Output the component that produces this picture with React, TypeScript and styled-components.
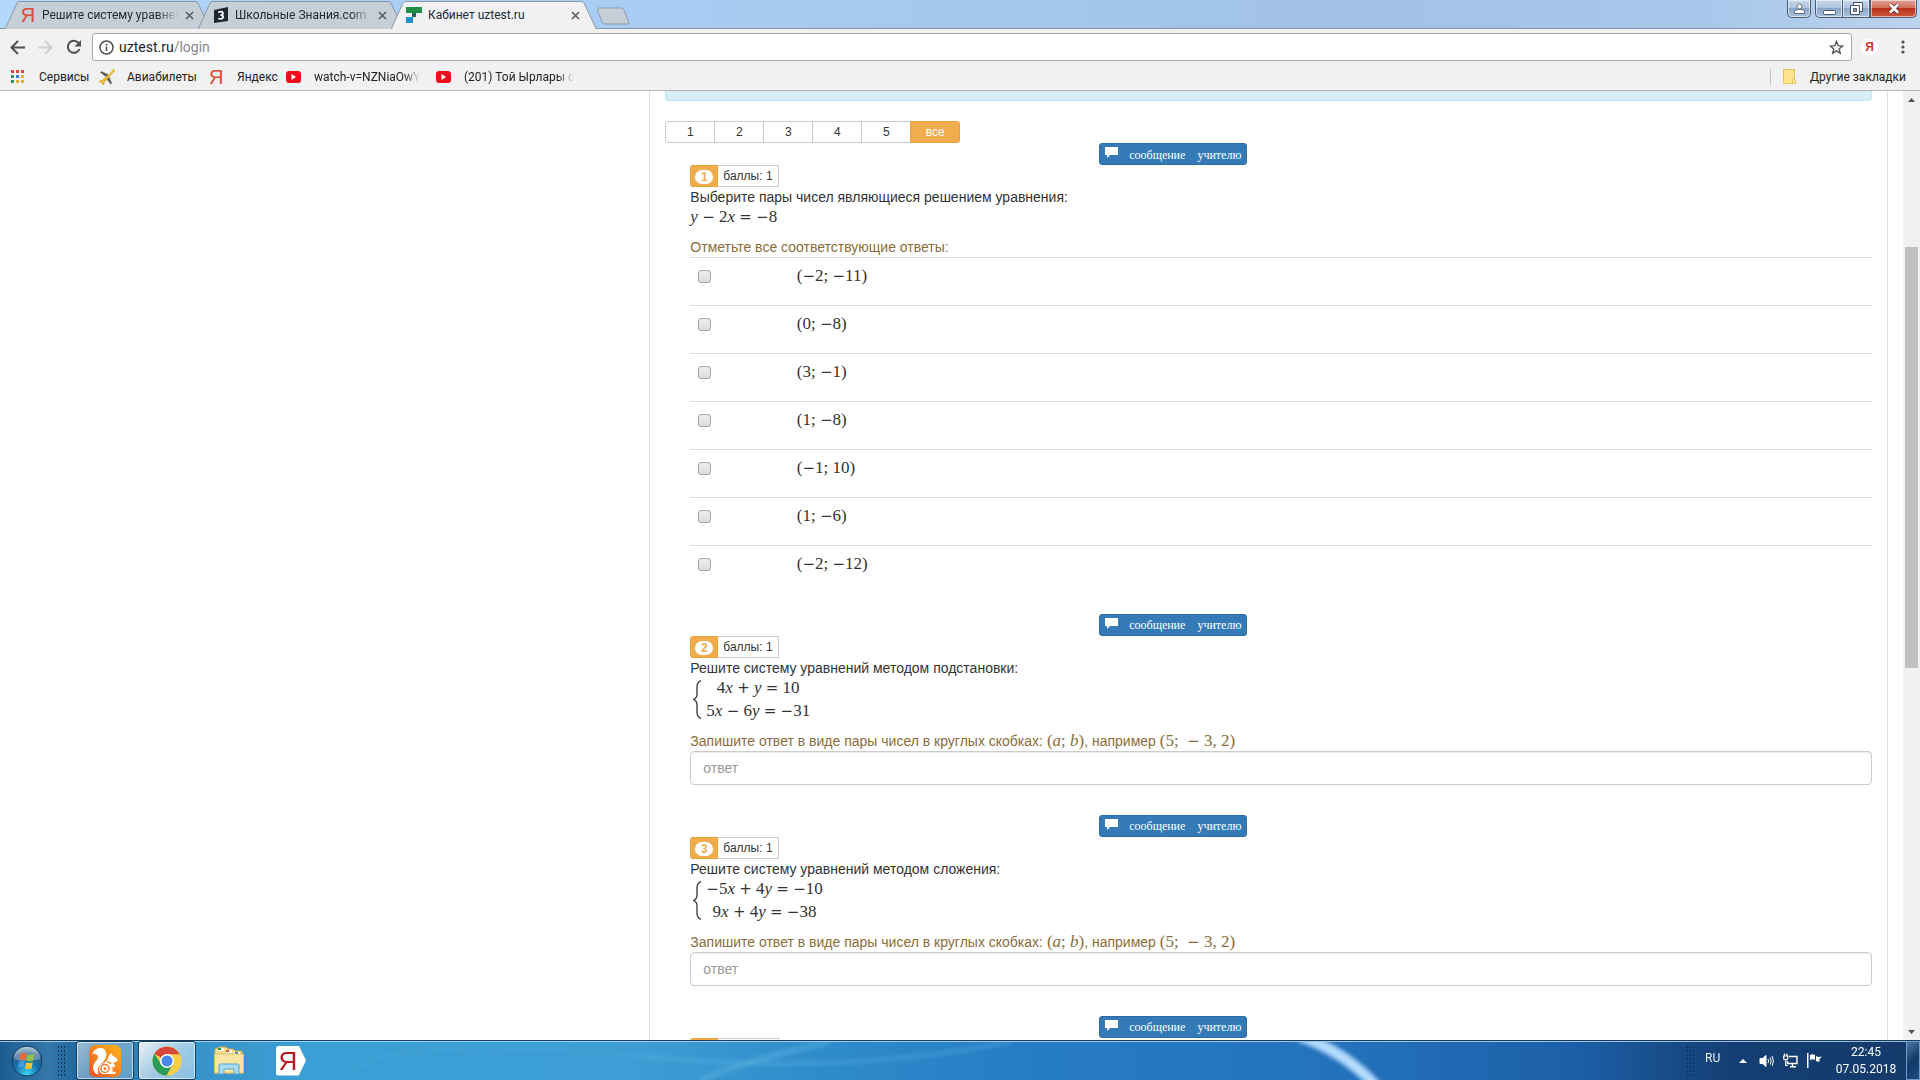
import React from "react";
import styled, { createGlobalStyle, css } from "styled-components";

const UI = `Roboto, "Noto Sans", sans-serif`;
const BODY = `"Liberation Sans", Arial, sans-serif`;
const NARROW = `"Liberation Sans Narrow", "Liberation Sans", Arial, sans-serif`;
const SERIF = `"Liberation Serif", "Times New Roman", serif`;

const GlobalStyle = createGlobalStyle`
  *, *::before, *::after { box-sizing: border-box; }
  body { margin: 0; font-family: ${BODY}; font-size: 14px; line-height: 20px; color: #333; background: #fff; }
  button, input { font: inherit; color: inherit; margin: 0; }
  button { padding: 0; border: 0; background: none; }
  a { color: inherit; text-decoration: none; }
  svg { display: block; flex: none; }
`;

const Screen = styled.div`
  height: 100vh;
  display: flex;
  flex-direction: column;
  overflow: hidden;
`;

/* ---------- Browser chrome ---------- */

const TitleBar = styled.header`
  flex: none;
  height: 29px;
  display: flex;
  align-items: flex-start;
  padding-left: 5px;
  background: linear-gradient(90deg, #b4d8fb 0, #a9cdf3 30%, #a1c2e6 70%, #a6c6ea 88%, #bcd3ec 100%);
  border-bottom: 1px solid #8797ab;
  font-family: ${UI};
`;

const Tabs = styled.nav`
  display: flex;
  height: 29px;
  padding-top: 1px;
`;

const TabBox = styled.div<{ $active?: boolean }>`
  position: relative;
  z-index: ${(p) => (p.$active ? 2 : 0)};
  width: 206px;
  height: 28px;
  display: flex;
  align-items: center;
  padding: 0 14px 0 15px;
  & + & { margin-left: -13px; }
`;

const TabShape = styled.svg`
  position: absolute;
  inset: 0;
  z-index: -1;
  width: 100%;
  height: 100%;
`;

const TabIcon = styled.span`
  width: 16px;
  height: 20px;
  display: flex;
  align-items: center;
  justify-content: center;
`;

const fade = css`
  mask-image: linear-gradient(90deg, #000 85%, transparent 100%);
`;

const TabTitle = styled.button<{ $fade?: boolean }>`
  flex: 1;
  min-width: 0;
  margin: 0 3px 0 6px;
  white-space: nowrap;
  text-align: left;
  font-size: 12px;
  line-height: 20px;
  color: #222b36;
  ${(p) => p.$fade && fade}
`;

const TabClose = styled.button`
  width: 16px;
  height: 16px;
  display: flex;
  align-items: center;
  justify-content: center;
`;

const NewTab = styled.button`
  margin-top: 7px;
`;

const WindowButtons = styled.div`
  margin-left: auto;
  margin-right: 3px;
  display: flex;
`;

const WinButton = styled.button<{ $w: number; $close?: boolean; $edge?: "left" | "right" | "both" }>`
  width: ${(p) => p.$w}px;
  height: 18px;
  display: flex;
  align-items: center;
  justify-content: center;
  border: 1px solid #4a5e78;
  border-top: 0;
  border-left-width: ${(p) => (p.$edge ? 1 : 0)}px;
  border-radius: ${(p) => (p.$edge ? { left: "0 0 0 5px", right: "0 0 5px 0", both: "0 0 5px 5px" }[p.$edge] : "0")};
  margin-right: ${(p) => (p.$edge === "both" ? 4 : 0)}px;
  box-shadow: inset 0 0 0 1px rgba(255, 255, 255, 0.55);
  background: ${(p) =>
    p.$close
      ? "linear-gradient(#e2a396 0, #d2705c 45%, #b8311a 50%, #d0573c 100%)"
      : "linear-gradient(#c6d7ea 0, #aec3dc 45%, #8ba6c6 50%, #a9c2de 100%)"};
`;

const Toolbar = styled.div`
  flex: none;
  height: 34px;
  display: flex;
  align-items: center;
  padding: 2px 9px 0 10px;
  background: #f1f1f1;
`;

const NavButton = styled.button`
  width: 28px;
  height: 28px;
  display: flex;
  align-items: center;
`;

const Omnibox = styled.div`
  flex: 1;
  height: 28px;
  margin: 0 9px 0 -2px;
  padding: 0 7px 0 6px;
  display: flex;
  align-items: center;
  border: 1px solid #a9a9a9;
  border-radius: 3px;
  background: #fff;
`;

const Address = styled.div`
  flex: 1;
  height: 20px;
  margin-left: 5px;
  font-family: ${UI};
  font-size: 14px;
  line-height: 20px;
  color: #222;
  outline: none;
  span { color: #888; }
`;

const Extension = styled.button`
  width: 17px;
  height: 17px;
  border-radius: 50%;
  background: #fff;
  color: #d9302b;
  font-family: ${NARROW};
  font-size: 12px;
  font-weight: bold;
  line-height: 17px;
  margin-right: 16px;
`;

const MenuButton = styled.button`
  width: 17px;
  height: 20px;
  display: flex;
  align-items: center;
  justify-content: center;
`;

const Bookmarks = styled.nav`
  flex: none;
  height: 28px;
  display: flex;
  align-items: center;
  padding: 0 14px 0 11px;
  background: #f1f1f1;
  border-bottom: 1px solid #b3b3b3;
  font-family: ${UI};
  font-size: 12px;
  color: #222;
`;

const Bookmark = styled.a<{ $w: number }>`
  width: ${(p) => p.$w}px;
  display: flex;
  align-items: center;
  white-space: nowrap;
`;

const BookmarkTitle = styled.span<{ $fade?: boolean }>`
  ${(p) => p.$fade && fade}
`;

const BookmarkIcon = styled.span`
  flex: none;
  width: 16px;
  height: 20px;
  margin-right: 12px;
  display: flex;
  align-items: center;
`;

const OtherBookmarks = styled.a`
  margin-left: auto;
  height: 16px;
  display: flex;
  align-items: center;
  gap: 14px;
  padding-left: 12px;
  border-left: 1px solid #c0c0c0;
`;

const YaLetter = styled.span<{ $size: number }>`
  font-family: ${NARROW};
  font-size: ${(p) => p.$size}px;
  line-height: 20px;
  color: #dd4b39;
`;

/* ---------- Page ---------- */

const Viewport = styled.main`
  flex: 1;
  min-height: 0;
  display: flex;
  overflow: hidden;
  background: #fff;
`;

const PageBody = styled.div`
  flex: 1;
  min-width: 0;
  display: flex;
  padding-right: 15px;
`;

const Sidebar = styled.div`
  flex: none;
  width: calc(100% / 3 + 20px);
`;

const Panel = styled.div`
  flex: 1;
  min-width: 0;
  height: max-content;
  padding: 0 15px;
  border: solid #ddd;
  border-width: 0 1px;
`;

const Alert = styled.div`
  height: 10px;
  margin-bottom: 20px;
  background: #d9edf7;
  border: 1px solid #bce8f1;
  border-top: 0;
  border-radius: 0 0 4px 4px;
`;

const Pager = styled.div`
  display: flex;
`;

const PageButton = styled.button<{ $active?: boolean }>`
  width: 50px;
  height: 22px;
  font-size: 12px;
  line-height: 18px;
  text-align: center;
  border: 1px solid ${(p) => (p.$active ? "#eea236" : "#ccc")};
  background: ${(p) => (p.$active ? "#f0ad4e" : "#fff")};
  color: ${(p) => (p.$active ? "#fff" : "#333")};
  & + & { margin-left: -1px; }
  &:first-child { border-radius: 3px 0 0 3px; }
  &:last-child { border-radius: 0 3px 3px 0; }
`;

const QuestionBox = styled.section`
  padding-left: 25px;
  margin-bottom: 20px;
`;

const MessageButton = styled.button`
  height: 22px;
  margin-left: calc(100% / 3 + 15px);
  padding: 1px 5px 0;
  display: flex;
  align-items: center;
  border: 1px solid #2e6da4;
  border-radius: 3px;
  background: #337ab7;
  color: #fff;
  font-family: ${SERIF};
  font-size: 12px;
  line-height: 20px;
  svg { margin: 0 11px 4px 0; }
  span + span { margin-left: 12px; }
`;

const Score = styled.div`
  display: flex;
  width: max-content;
  height: 22px;
  font-size: 12px;
  line-height: 20px;
`;

const Num = styled.span`
  width: 28px;
  display: flex;
  align-items: center;
  justify-content: center;
  border: 1px solid #eea236;
  border-radius: 3px 0 0 3px;
  background: #f0ad4e;
`;

const NumBadge = styled.span`
  width: 18px;
  height: 14px;
  margin-top: 2px;
  border-radius: 8px;
  background: #fff;
  color: #f0ad4e;
  font-weight: bold;
  line-height: 14px;
  text-align: center;
`;

const Points = styled.span`
  padding: 0 5px;
  border: 1px solid #ccc;
  border-left: 0;
`;

const Text = styled.p`
  margin: 0;
`;

const Formula = styled.div`
  height: 20px;
`;

const hintStyle = css`
  display: block;
  height: 20px;
  margin: 10px 0 0;
  color: #8a6d3b;
`;

const Hint = styled.p`
  ${hintStyle}
`;

const HintLabel = styled.label`
  ${hintStyle}
`;

const MathText = styled.span`
  font-family: ${SERIF};
  font-size: 17px;
  line-height: 20px;
  white-space: pre;
`;

const Operator = styled.span`
  font-family: "DejaVu Sans", sans-serif;
  font-size: 15px;
  line-height: 16px;
`;

const System = styled.div`
  display: flex;
  align-items: center;
  gap: 4px;
  height: 43px;
  padding-left: 3px;
`;

const SystemRows = styled.div`
  display: grid;
  row-gap: 3px;
  justify-items: center;
`;

const Options = styled.table`
  width: 100%;
  border-collapse: collapse;
  table-layout: fixed;
  td { height: 48px; padding: 8px; border-top: 1px solid #ddd; vertical-align: top; }
  td:first-child { width: 8.3333%; }
`;

const OptionLabel = styled.label`
  display: block;
  height: 20px;
`;

const Check = styled.input`
  appearance: none;
  display: block;
  width: 13px;
  height: 13px;
  margin-top: 4px;
  border: 1px solid #a6a6a6;
  border-radius: 3px;
  background: linear-gradient(#eee, #dcdcdc);
`;

const Answer = styled.input`
  display: block;
  width: 100%;
  height: 34px;
  margin-bottom: 30px;
  padding: 6px 12px;
  border: 1px solid #ccc;
  border-radius: 4px;
  background: #fff;
  box-shadow: inset 0 1px 1px rgba(0, 0, 0, 0.075);
  &::placeholder { color: #999; opacity: 1; }
`;

const ScrollTrack = styled.div`
  flex: none;
  width: 17px;
  display: grid;
  grid-template-rows: 17px 139fr 421fr 355fr 17px;
  background: #f1f1f1;
`;

const ScrollArrow = styled.button<{ $row: number }>`
  grid-row: ${(p) => p.$row};
  display: flex;
  align-items: center;
  justify-content: center;
`;

const Thumb = styled.div`
  grid-row: 3;
  margin: 0 2px;
  background: #c1c1c1;
`;

/* ---------- Taskbar ---------- */

const TaskbarBox = styled.footer`
  position: relative;
  isolation: isolate;
  flex: none;
  height: 40px;
  display: flex;
  align-items: stretch;
  border-top: 1px solid #163d5e;
  box-shadow: inset 0 1px 0 rgba(200, 230, 250, 0.75);
  background: linear-gradient(90deg, #1d5c90 0, #3477a8 2.5%, #20689f 4%, #3691c8 9%, #3a9fd4 16%, #3c9ed4 33%, #2f8dcb 42%, #277ec5 52%, #2372bb 70%, #1c5fa8 82%, #184c88 87%, #143f74 90%, #143a69 100%);
`;

const Glow = styled.svg`
  position: absolute;
  inset: 1px 0 0 0;
  z-index: -1;
  width: 100%;
  height: 38px;
`;

const StartButton = styled.button`
  width: 53px;
  display: flex;
  align-items: center;
  justify-content: center;
`;

const Grip = styled.span`
  width: 9px;
  margin: 4px 10px 4px 4px;
  background-image: radial-gradient(circle, #0b3157 0 1px, transparent 1px);
  background-size: 3px 4px;
`;

const TaskButton = styled.button<{ $lit?: number }>`
  width: 58px;
  margin-right: 4px;
  display: flex;
  align-items: center;
  justify-content: center;
  ${(p) =>
    p.$lit &&
    css`
      border: 1px solid #123e60;
      border-radius: 3px;
      box-shadow: inset 0 0 0 1px rgba(255, 255, 255, 0.6);
      background: linear-gradient(135deg, rgba(255, 255, 255, ${p.$lit}) 0, rgba(255, 255, 255, ${p.$lit * 0.6}) 50%, rgba(255, 255, 255, ${p.$lit * 0.45}) 100%);
    `}
`;

const Tray = styled.div`
  margin-left: auto;
  display: flex;
  align-items: center;
  color: #fff;
  font-family: ${UI};
  font-size: 12px;
  & > ${Grip} { align-self: stretch; }
`;

const Language = styled.button`
  width: 17px;
  height: 26px;
  margin-right: 13px;
  padding-bottom: 6px;
  line-height: 20px;
  text-align: left;
  color: #e6eef7;
`;

const TrayIcons = styled.div`
  display: flex;
  align-items: center;
  gap: 9px;
`;

const TrayIcon = styled.button`
  width: 15px;
  height: 20px;
  display: flex;
  align-items: center;
  justify-content: center;
`;

const Clock = styled.time`
  width: 80px;
  margin-left: 4px;
  text-align: center;
  line-height: 17px;
  span { display: block; }
`;

const ShowDesktop = styled.button`
  align-self: stretch;
  width: 14px;
  border: 1px solid #6f9cc4;
  background: linear-gradient(135deg, #4f7aa6, #143a69 50%, #1b4a80);
`;

/* ---------- Icons ---------- */

const CloseX = () => (
  <svg width="9" height="9" viewBox="0 0 9 9" stroke="#55595e" strokeWidth="1.5">
    <path d="M1 1l7 7M8 1L1 8" />
  </svg>
);

const ZIcon = () => (
  <svg width="16" height="17" viewBox="0 0 16 17">
    <path d="M1 3L15 0V14L1 16Z" fill="#1f2730" />
    <path d="M5.200 5.200Q9.500 3.600 10 6 10 8 7.500 8.200 10.500 8.200 10.300 10.300 9.500 12.700 5.200 11.500" fill="none" stroke="#fff" strokeWidth="1.700" />
  </svg>
);

const UzIcon = () => (
  <svg width="16" height="16" viewBox="0 0 16 16">
    <path d="M0 0h16v6H0z" fill="#1f8f45" />
    <path d="M6 6h4v4H6z" fill="#28644e" />
    <path d="M0 10h7v6H0z" fill="#1990d2" />
  </svg>
);

const AppsIcon = () => (
  <svg width="13" height="13" viewBox="0 0 13 13">
    {["#db4437", "#d9483b", "#db4437", "#3b8d5a", "#3f79d8", "#e7b42c", "#2f8d5a", "#e5ad26", "#e5ad26"].map((c, i) => (
      <rect key={i} x={(i % 3) * 5} y={Math.floor(i / 3) * 5} width="3" height="3" fill={c} />
    ))}
  </svg>
);

const PlaneIcon = () => (
  <svg width="16" height="16" viewBox="0 0 16 16">
    <path d="M10 6L14 1.200Q15.800 0 15.500 1.800L10.500 7.500 5 13.500 4.800 15.500 3.600 15.600 3 13.600.6 12.800.8 11.600 3 11.500z" fill="#f2c230" stroke="#d9a51f" strokeWidth=".8" />
    <path d="M1 3.200L2.500 2.200 9.500 5.500 7 8z" fill="#62645a" />
    <path d="M10.300 8L13 14.200 11.800 15.500 7.800 10.500z" fill="#62645a" />
  </svg>
);

const YoutubeIcon = () => (
  <svg width="15" height="12" viewBox="0 0 15 12">
    <rect width="15" height="12" rx="3" fill="#e8101a" />
    <path d="M5.500 3l4.500 3-4.500 3z" fill="#fff" />
  </svg>
);

const FolderIcon = () => (
  <svg width="13" height="15" viewBox="0 0 13 15">
    <path d="M.5.5h11v10l1 1v3H.5z" fill="#fde38c" stroke="#e6c65c" />
    <path d="M9.500 14v-3.500h2" fill="none" stroke="#e6c65c" />
  </svg>
);

const StarIcon = () => (
  <svg width="15" height="15" viewBox="0 0 15 15" fill="none" stroke="#555" strokeWidth="1.400">
    <path d="M7.500 1.500l1.700 4.200 4.500.3-3.500 2.900 1.100 4.400-3.800-2.400-3.800 2.400 1.100-4.400L1.300 6l4.500-.3z" />
  </svg>
);

const SpeechIcon = () => (
  <svg width="13" height="11" viewBox="0 0 13 11">
    <path d="M0 0h13v8H5l-3 3V8H0z" fill="#fff" />
  </svg>
);

const Brace = () => (
  <svg width="9" height="39" viewBox="0 0 9 39" fill="none" stroke="#333" strokeWidth="1.300">
    <path d="M8 .7Q4 2 4 7v7q0 4-3.300 5.500Q4 21 4 25v7q0 5 4 6.300" />
  </svg>
);

const WindowsOrb = () => (
  <svg width="32" height="32" viewBox="0 0 32 32">
    <defs>
      <radialGradient id="orb" cx="50%" cy="95%" r="95%">
        <stop offset="0" stopColor="#3fd8f5" />
        <stop offset=".45" stopColor="#1671ad" />
        <stop offset=".75" stopColor="#2b5f8c" />
        <stop offset="1" stopColor="#a7c3d8" />
      </radialGradient>
    </defs>
    <circle cx="16" cy="16" r="15" fill="url(#orb)" stroke="#123c60" />
    <path d="M3 14a13 12 0 0 1 26 0q-13 4-26 0z" fill="#fff" opacity=".3" />
    <path d="M9.500 9q3-2 6-.3l-1.200 6.500q-3-1.500-6 .3z" fill="#ef6a2c" />
    <path d="M16.700 9.300q3 1.500 6.500 0L22 15.800q-3.300 1.500-6.500 0z" fill="#8cc63e" />
    <path d="M8 16.800q3-1.800 6-.3l-1.200 6.200q-3-1.500-6 .3z" fill="#3f9de0" />
    <path d="M15.200 17.200q3.300 1.500 6.500 0l-1.200 6.300q-3.300 1.500-6.500 0z" fill="#fbc628" />
  </svg>
);

const UCIcon = () => (
  <svg width="32" height="32" viewBox="0 0 32 32">
    <defs>
      <linearGradient id="uc" x1="1" y1="0" x2="0" y2="1">
        <stop offset="0" stopColor="#fdb515" />
        <stop offset="1" stopColor="#f0532d" />
      </linearGradient>
    </defs>
    <rect width="32" height="32" rx="6" fill="url(#uc)" />
    <path d="M13 3Q5 2 3.500 9.500q3-2 5 1Q10 13 7 16q-4 4-2.500 9 1 3.500 5 4.500-2-6 2-10l3-3Q19 11 16.500 6 15.500 3.500 13 3z" fill="#fff" />
    <path d="M22 8l2 3q4 1 4.500 4.500-1.500 2-4.500 2 2.500 2 2 5l-2.500-1v5l3 .5v2H14q-4-1-4-5t5-6q3-1.500 4-4.500.7-3 3-5.500z" fill="#fff" />
    <circle cx="16" cy="23.500" r="4" fill="none" stroke="#f37a26" strokeWidth="1.500" />
    <circle cx="16" cy="23.500" r="1.500" fill="#f37a26" />
    <path d="M18 17q3-.5 4 2" stroke="#f58a25" fill="none" strokeWidth="1.500" />
  </svg>
);

const ChromeIcon = () => (
  <svg width="30" height="30" viewBox="0 0 30 30">
    <circle cx="15" cy="15" r="14.500" fill="#f9cf45" />
    <path d="M15 15L2.400 7.800A14.500 14.500 0 0 1 27.600 8.300H15z" fill="#d8453a" />
    <path d="M2.400 7.800A14.500 14.500 0 0 0 14.500 29.500L20.800 18.300 15 15 9.200 18.300z" fill="#279b57" />
    <circle cx="15" cy="15" r="7" fill="#fff" />
    <circle cx="15" cy="15" r="5.500" fill="#4687f0" />
  </svg>
);

const ExplorerIcon = () => (
  <svg width="32" height="30" viewBox="0 0 32 30">
    <path d="M2 3L7 1h6l2 2h5l2 2h7v22H2z" fill="#f2dc8c" stroke="#c9ad58" />
    <path d="M5 2h6v3H5zM13 4h6v3h-6zM21 6h6v3h-6z" fill="#fff" />
    <path d="M5 2h3v2H5z" fill="#25a043" />
    <path d="M13 4h3v2h-3z" fill="#d94c30" />
    <path d="M22 6h3v2h-3z" fill="#2a7fc8" />
    <path d="M1.500 8h29v19h-29z" fill="#f7e6a2" stroke="#dcc16c" />
    <path d="M6 28V19q0-1 1-1h18q1 0 1 1v9h-5v-5H11v5z" fill="#a8daf0" stroke="#5ba5cc" />
  </svg>
);

const YaShape = styled.span`
  width: 30px;
  height: 30px;
  display: flex;
  align-items: center;
  justify-content: center;
  padding-right: 6px;
  background: #fff;
  border-radius: 3px 0 0 3px;
  clip-path: polygon(0 0, 76% 0, 100% 50%, 76% 100%, 0 100%);
  color: #b71c24;
  font-family: ${NARROW};
  font-size: 26px;
`;

/* ---------- Content ---------- */

type TabInfo = { title: string; icon: React.ReactNode; active?: boolean };

const TABS: TabInfo[] = [
  { title: "Решите систему уравнен", icon: <YaLetter $size={20}>Я</YaLetter> },
  { title: "Школьные Знания.com -", icon: <ZIcon /> },
  { title: "Кабинет uztest.ru", icon: <UzIcon />, active: true },
];

const BOOKMARKS = [
  { title: "Сервисы", icon: <AppsIcon />, w: 88 },
  { title: "Авиабилеты", icon: <PlaneIcon />, w: 110 },
  { title: "Яндекс", icon: <YaLetter $size={20}>Я</YaLetter>, w: 77 },
  { title: "watch-v=NZNiaOwY", icon: <YoutubeIcon />, w: 150, fade: true },
  { title: "(201) Той Ырлары с", icon: <YoutubeIcon />, w: 150, fade: true },
];

const OPTIONS = ["(−2; −11)", "(0; −8)", "(3; −1)", "(1; −8)", "(−1; 10)", "(1; −6)", "(−2; −12)"];

function Equation({ children }: { children: string }) {
  return (
    <MathText>
      {children.split(/([a-z]|[−+=])/).map((part, i) => {
        if (/^[a-z]$/.test(part)) return <i key={i}>{part}</i>;
        if (/^[−+=]$/.test(part)) return <Operator key={i}>{part}</Operator>;
        return part;
      })}
    </MathText>
  );
}

function Tab({ title, icon, active }: TabInfo) {
  return (
    <TabBox $active={active}>
      <TabShape viewBox="0 0 206 28" preserveAspectRatio="none">
        <path
          d="M0 28.500L12 2Q13 .5 15 .5H190Q192 .5 193 2L205.500 28.500"
          fill={active ? "#f1f1f1" : "#c6ced8"}
          stroke="#8b97a6"
        />
      </TabShape>
      <TabIcon>{icon}</TabIcon>
      <TabTitle $fade={!active}>{title}</TabTitle>
      <TabClose aria-label="Закрыть">
        <CloseX />
      </TabClose>
    </TabBox>
  );
}

function Question({ n, children }: { n: number; children?: React.ReactNode }) {
  return (
    <QuestionBox>
      <MessageButton>
        <SpeechIcon />
        <span>сообщение</span>
        <span>учителю</span>
      </MessageButton>
      <Score>
        <Num>
          <NumBadge>{n}</NumBadge>
        </Num>
        <Points>баллы: 1</Points>
      </Score>
      {children}
    </QuestionBox>
  );
}

function SystemQuestion({ n, text, rows }: { n: number; text: string; rows: string[] }) {
  return (
    <Question n={n}>
      <Text>{text}</Text>
      <System>
        <Brace />
        <SystemRows>
          {rows.map((r) => (
            <Equation key={r}>{r}</Equation>
          ))}
        </SystemRows>
      </System>
      <HintLabel htmlFor={`answer-${n}`}>
        Запишите ответ в виде пары чисел в круглых скобках: <Equation>(a; b)</Equation>, например{" "}
        <Equation>(5;  − 3, 2)</Equation>
      </HintLabel>
      <Answer id={`answer-${n}`} placeholder="ответ" />
    </Question>
  );
}

export default function App() {
  return (
    <Screen>
      <GlobalStyle />
      <TitleBar>
        <Tabs>
          {TABS.map((t) => (
            <Tab key={t.title} {...t} />
          ))}
        </Tabs>
        <NewTab aria-label="Новая вкладка">
          <svg width="33" height="18" viewBox="0 0 33 18">
            <path d="M1 1h23q2 0 3 2l5 13q0 1-1 1H8q-2 0-3-2L.5 3Q0 1 1 1z" fill="#c6ced8" stroke="#8b9bb0" />
          </svg>
        </NewTab>
        <WindowButtons>
          <WinButton $w={24} $edge="both" aria-label="Профиль">
            <svg width="11" height="11" viewBox="0 0 11 11" fill="#fff" stroke="#4a5568" strokeWidth=".8">
              <path d="M.5 10.500V8.500Q1 6.500 4 6.500h3q3 0 3.500 2v2z" />
              <circle cx="5.500" cy="3.500" r="2.500" />
            </svg>
          </WinButton>
          <WinButton $w={28} $edge="left" aria-label="Свернуть">
            <svg width="13" height="14" viewBox="0 0 13 14">
              <rect x=".5" y="8.500" width="12" height="4" rx="1" fill="#fff" stroke="#4a5568" />
            </svg>
          </WinButton>
          <WinButton $w={27} aria-label="Развернуть">
            <svg width="13" height="13" viewBox="0 0 13 13" fill="#fff" stroke="#4a5568">
              <path d="M3.500.5h9v9h-9z" />
              <path d="M.5 3.500h9v9h-9z" />
              <path d="M3.500 6.500h3v3h-3z" fill="#8ba6c6" />
            </svg>
          </WinButton>
          <WinButton $w={47} $close $edge="right" aria-label="Закрыть окно">
            <svg width="12" height="11" viewBox="0 0 12 11">
              <path d="M2 1.500l8 8M10 1.500l-8 8" stroke="#5b3a3a" strokeWidth="4" />
              <path d="M2 1.500l8 8M10 1.500l-8 8" stroke="#fff" strokeWidth="2.500" />
            </svg>
          </WinButton>
        </WindowButtons>
      </TitleBar>

      <Toolbar>
        <NavButton aria-label="Назад">
          <svg width="15" height="15" viewBox="0 0 15 15" fill="none" stroke="#505050" strokeWidth="2">
            <path d="M15 7.500H2M8 1L1.500 7.500 8 14" />
          </svg>
        </NavButton>
        <NavButton aria-label="Вперёд">
          <svg width="15" height="15" viewBox="0 0 15 15" fill="none" stroke="#cfcfcf" strokeWidth="2">
            <path d="M0 7.500h13M7 1l6.500 6.500L7 14" />
          </svg>
        </NavButton>
        <NavButton aria-label="Обновить">
          <svg width="16" height="16" viewBox="0 0 16 16">
            <path d="M13.500 10A6 6 0 1 1 12.500 4" fill="none" stroke="#505050" strokeWidth="2" />
            <path d="M15 1v6.500H8.500z" fill="#505050" />
          </svg>
        </NavButton>
        <Omnibox>
          <svg width="15" height="15" viewBox="0 0 15 15">
            <circle cx="7.500" cy="7.500" r="6.500" fill="none" stroke="#505050" strokeWidth="1.500" />
            <path d="M6.700 6.500h1.600V11H6.700zM6.700 3.800h1.600v1.600H6.700z" fill="#505050" />
          </svg>
          <Address role="textbox" contentEditable suppressContentEditableWarning aria-label="Адрес" spellCheck={false}>
            uztest.ru<span>/login</span>
          </Address>
          <button aria-label="Добавить в закладки">
            <StarIcon />
          </button>
        </Omnibox>
        <Extension>Я</Extension>
        <MenuButton aria-label="Меню">
          <svg width="4" height="14" viewBox="0 0 4 14" fill="#505050">
            <circle cx="2" cy="2" r="1.600" />
            <circle cx="2" cy="7" r="1.600" />
            <circle cx="2" cy="12" r="1.600" />
          </svg>
        </MenuButton>
      </Toolbar>

      <Bookmarks>
        {BOOKMARKS.map((b) => (
          <Bookmark key={b.title} href="#" $w={b.w}>
            <BookmarkIcon>{b.icon}</BookmarkIcon>
            <BookmarkTitle $fade={b.fade}>{b.title}</BookmarkTitle>
          </Bookmark>
        ))}
        <OtherBookmarks href="#">
          <FolderIcon />
          Другие закладки
        </OtherBookmarks>
      </Bookmarks>

      <Viewport>
        <PageBody>
          <Sidebar />
          <Panel>
            <Alert />
            <Pager>
              {["1", "2", "3", "4", "5", "все"].map((p) => (
                <PageButton key={p} $active={p === "все"}>
                  {p}
                </PageButton>
              ))}
            </Pager>

            <Question n={1}>
              <Text>Выберите пары чисел являющиеся решением уравнения:</Text>
              <Formula>
                <Equation>y − 2x = −8</Equation>
              </Formula>
              <Hint>Отметьте все соответствующие ответы:</Hint>
              <Options>
                <tbody>
                  {OPTIONS.map((o, i) => (
                    <tr key={o}>
                      <td>
                        <Check type="checkbox" id={`option-${i}`} />
                      </td>
                      <td>
                        <OptionLabel htmlFor={`option-${i}`}>
                          <Equation>{o}</Equation>
                        </OptionLabel>
                      </td>
                    </tr>
                  ))}
                </tbody>
              </Options>
            </Question>

            <SystemQuestion n={2} text="Решите систему уравнений методом подстановки:" rows={["4x + y = 10", "5x − 6y = −31"]} />
            <SystemQuestion n={3} text="Решите систему уравнений методом сложения:" rows={["−5x + 4y = −10", "9x + 4y = −38"]} />
            <Question n={4} />
          </Panel>
        </PageBody>
        <ScrollTrack>
          <ScrollArrow $row={1} aria-label="Вверх">
            <svg width="7" height="4" viewBox="0 0 7 4">
              <path d="M0 4L3.500 0 7 4z" fill="#505050" />
            </svg>
          </ScrollArrow>
          <Thumb />
          <ScrollArrow $row={5} aria-label="Вниз">
            <svg width="7" height="4" viewBox="0 0 7 4">
              <path d="M0 0L3.500 4 7 0z" fill="#505050" />
            </svg>
          </ScrollArrow>
        </ScrollTrack>
      </Viewport>

      <TaskbarBox>
        <Glow viewBox="0 0 1920 38" preserveAspectRatio="none">
          <defs>
            <filter id="soft" x="-20%" y="-20%" width="140%" height="140%">
              <feGaussianBlur stdDeviation="2" />
            </filter>
          </defs>
          <g filter="url(#soft)" fill="none">
            <path d="M640 14Q840 34 1010 0" stroke="#6fc0ea" strokeWidth="4" opacity=".3" />
            <path d="M700 38Q760 14 830 0" stroke="#7cc6ee" strokeWidth="6" opacity=".3" />
            <path d="M350 38Q360 14 410 10 500 0 640 14" stroke="#7cc6ee" strokeWidth="3" opacity=".15" />
            <path d="M1300 -6Q1345 10 1376 44" stroke="#b4dbff" strokeWidth="11" />
          </g>
        </Glow>
        <StartButton aria-label="Пуск">
          <WindowsOrb />
        </StartButton>
        <Grip />
        <TaskButton $lit={0.55} aria-label="UC Browser">
          <UCIcon />
        </TaskButton>
        <TaskButton $lit={0.9} aria-label="Chrome">
          <ChromeIcon />
        </TaskButton>
        <TaskButton aria-label="Проводник">
          <ExplorerIcon />
        </TaskButton>
        <TaskButton>
          <YaShape>Я</YaShape>
        </TaskButton>
        <Tray>
          <Grip />
          <Language>RU</Language>
          <TrayIcons>
            <TrayIcon aria-label="Скрытые значки">
              <svg width="8" height="4" viewBox="0 0 8 4">
                <path d="M0 4l4-4 4 4z" fill="#fff" />
              </svg>
            </TrayIcon>
            <TrayIcon aria-label="Громкость">
              <svg width="15" height="14" viewBox="0 0 15 14" fill="none" stroke="#fff">
                <path d="M1 4.500h2.500L7 1.500v11L3.500 9.500H1z" fill="#fff" />
                <path d="M9 5q1.300 2 0 4M11 3.500q2.500 3.500 0 7M13 2q3 5 0 10" />
              </svg>
            </TrayIcon>
            <TrayIcon aria-label="Сеть">
              <svg width="15" height="15" viewBox="0 0 15 15" fill="none" stroke="#fff" strokeWidth="1.400">
                <path d="M6 3.500h8v7H4.500V8M7 13.800h6M9.500 11v3" />
                <path d="M.7 3h4v2.500q0 1-1 1h-2q-1 0-1-1zM1.500 3V.5M4 3V.5M2.700 7v5.500h2" strokeWidth="1.200" />
              </svg>
            </TrayIcon>
            <TrayIcon aria-label="Центр поддержки">
              <svg width="15" height="15" viewBox="0 0 15 15" fill="#fff">
                <path d="M0 0h1.500v15H0zM3 2q3-1.500 5 0v5q-2-1.500-5 0zM9 3q2 1.500 6 .5L12.500 6v2.500Q10.500 9 9 8z" />
              </svg>
            </TrayIcon>
          </TrayIcons>
          <Clock>
            <span>22:45</span>
            <span>07.05.2018</span>
          </Clock>
          <ShowDesktop aria-label="Свернуть все окна" />
        </Tray>
      </TaskbarBox>
    </Screen>
  );
}
